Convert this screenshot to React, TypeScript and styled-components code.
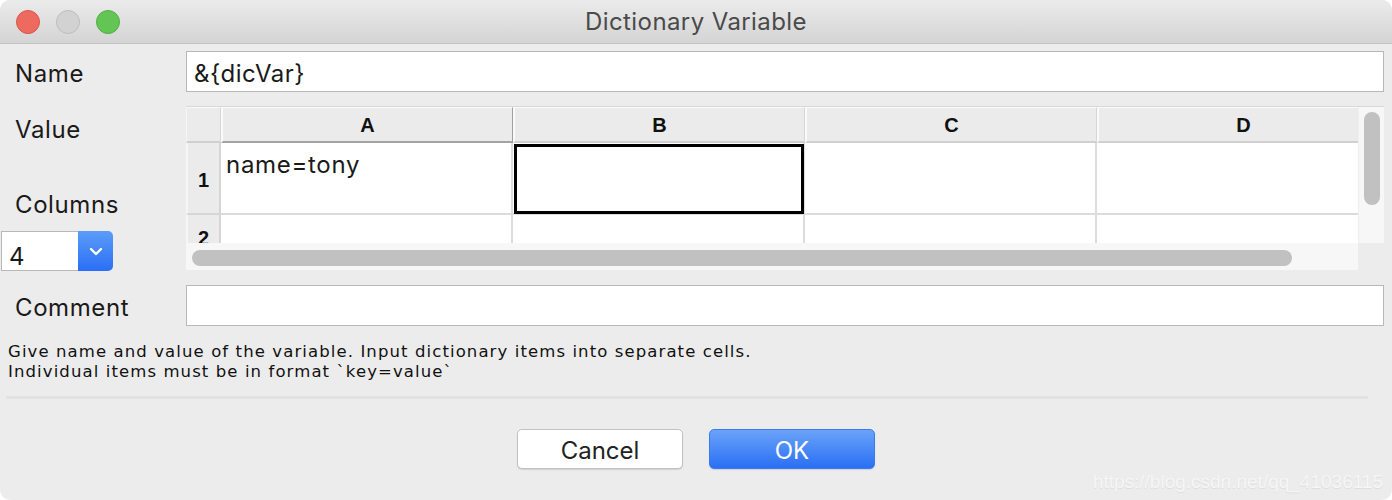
import React from "react";
import styled, { createGlobalStyle } from "styled-components";

const Global = createGlobalStyle`
  html, body { margin: 0; padding: 0; background: #ffffff; }
  body { width: 1392px; height: 500px; overflow: hidden; }
`;

const UI = `"Inter", "Liberation Sans", sans-serif`;

const Window = styled.div`
  width: 1392px;
  height: 500px;
  box-sizing: border-box;
  background: #ececec;
  border-radius: 10px;
  overflow: hidden;
  display: flex;
  flex-direction: column;
  position: relative;
  font-family: ${UI};
  color: #1a1a1a;
`;

const TitleBar = styled.div`
  height: 43px;
  flex: none;
  display: flex;
  align-items: center;
  position: relative;
  background: linear-gradient(#ebebeb, #d4d4d4);
  border-bottom: 1px solid #c4c4c4;
  padding-left: 16px;
  gap: 16px;
`;

const Light = styled.span<{ $c: string; $b: string }>`
  width: 22px;
  height: 22px;
  border-radius: 50%;
  background: ${(p) => p.$c};
  border: 1px solid ${(p) => p.$b};
`;

const Title = styled.div`
  position: absolute;
  left: 0;
  right: 0;
  text-align: center;
  font-size: 24px;
  letter-spacing: 0.4px;
  color: #4a4a4a;
  pointer-events: none;
`;

const Body = styled.div`
  display: flex;
  flex-direction: column;
  padding: 7px 8px 0 0;
`;

const FormRow = styled.div<{ $mt?: number }>`
  display: grid;
  grid-template-columns: 186px 1fr;
  margin-top: ${(p) => p.$mt ?? 0}px;
`;

const Label = styled.div<{ $h?: number; $bottom?: boolean }>`
  font-size: 24px;
  letter-spacing: 0.6px;
  padding-left: 15px;
  padding-top: 3px;
  box-sizing: border-box;
  height: ${(p) => p.$h ?? 41}px;
  display: flex;
  align-items: ${(p) => (p.$bottom ? "flex-end" : "center")};
`;

const TextBox = styled.div`
  height: 41px;
  box-sizing: border-box;
  background: #fff;
  border: 1px solid #b8b8b8;
  font-size: 24px;
  letter-spacing: 0.5px;
  padding: 4px 0 0 7px;
  display: flex;
  align-items: center;
`;

const LeftStack = styled.div`
  display: flex;
  flex-direction: column;
`;

const Combo = styled.div`
  margin: 12px 0 0 1px;
  width: 112px;
  height: 40px;
  display: flex;
`;

const ComboField = styled.div`
  width: 77px;
  box-sizing: border-box;
  background: #fff;
  border: 1px solid #b8b8b8;
  border-right: none;
  font-size: 24px;
  padding-left: 7px;
  padding-top: 10px;
  display: flex;
  align-items: center;
`;

const ComboButton = styled.div`
  flex: 1;
  background: linear-gradient(#5c9cf8, #2a6ff5);
  border-radius: 0 5px 5px 0;
  display: flex;
  align-items: center;
  justify-content: center;
`;

const TableFrame = styled.div`
  height: 164px;
  display: grid;
  grid-template-columns: 1fr 26px;
  grid-template-rows: 136px 27px;
  border-top: 1px solid #d8d8d8;
`;

const Viewport = styled.div`
  overflow: hidden;
  background: #ececec;
`;

const Grid = styled.div`
  display: grid;
  grid-template-columns: 35px repeat(4, 292px);
  grid-template-rows: 36px 72px 44px;
  width: max-content;
`;

const HeadCell = styled.div<{ $active?: boolean }>`
  background: #ebebeb;
  box-sizing: border-box;
  border-top: 1px solid #fafafa;
  border-left: 2px solid #fafafa;
  border-right: 1px solid ${(p) => (p.$active ? "#9f9f9f" : "#d6d6d6")};
  border-bottom: 2px solid ${(p) => (p.$active ? "#a3a3a3" : "#d0d0d0")};
  font-family: "Liberation Sans", sans-serif;
  font-weight: bold;
  font-size: 20px;
  padding-top: 2px;
  display: flex;
  align-items: center;
  justify-content: center;
  color: #111;
`;

const RowHead = styled(HeadCell)`
  border-top: none;
  border-bottom: 2px solid #d6d6d6;
  border-left: 2px solid #f6f6f6;
  border-right: 2px solid #d6d6d6;
  padding-top: 4px;
`;

const Cell = styled.div<{ $selected?: boolean }>`
  background: #fff;
  box-sizing: border-box;
  border-right: 2px solid #dcdcdc;
  border-bottom: 2px solid #dcdcdc;
  font-size: 24px;
  letter-spacing: 0.7px;
  padding: 7px 0 0 5px;
  outline: ${(p) => (p.$selected ? "3px solid #000" : "none")};
  outline-offset: -4px;
`;

const VTrack = styled.div`
  background: #f7f7f7;
  border-left: 1px solid #efefef;
  padding: 5px 4px 0 5px;
`;

const VThumb = styled.div`
  height: 93px;
  border-radius: 8px;
  background: #c1c1c1;
`;

const HTrack = styled.div`
  background: #f7f7f7;
  padding: 7px 0 0 6px;
`;

const HThumb = styled.div`
  width: 1100px;
  height: 16px;
  border-radius: 8px;
  background: #c1c1c1;
`;

const Corner = styled.div`
  background: #ececec;
`;

const Help = styled.div`
  font-family: "DejaVu Sans", sans-serif;
  font-size: 16.5px;
  letter-spacing: 1.1px;
  line-height: 20px;
  color: #111;
  padding-left: 8px;
  margin-top: 16px;
  white-space: nowrap;
`;

const Separator = styled.div`
  margin: 14px 16px 0 6px;
  height: 3px;
  background: #e2e2e2;
`;

const Buttons = styled.div`
  display: flex;
  justify-content: center;
  gap: 26px;
  margin-top: 30px;
  padding-left: 8px;
`;

const Button = styled.div<{ $primary?: boolean }>`
  width: 166px;
  height: 40px;
  box-sizing: border-box;
  border-radius: 5px;
  font-size: 24px;
  padding-top: 2px;
  display: flex;
  align-items: center;
  justify-content: center;
  background: ${(p) => (p.$primary ? "linear-gradient(#6aa3f8, #2a6ff5)" : "#fff")};
  color: ${(p) => (p.$primary ? "#fff" : "#222")};
  border: 1px solid ${(p) => (p.$primary ? "#3a7bf0" : "#c2c2c2")};
  box-shadow: 0 1px 1px rgba(0, 0, 0, 0.12);
`;

const Watermark = styled.div`
  position: absolute;
  right: 9px;
  bottom: 7px;
  font-family: "Liberation Sans", sans-serif;
  font-size: 19px;
  color: #f6f6f6;
  text-shadow: 0 1px 1px rgba(0, 0, 0, 0.07);
`;

const Chevron = () => (
  <svg width="14" height="9" viewBox="0 0 14 9">
    <path d="M2 2 L7 7 L12 2" fill="none" stroke="#fff" strokeWidth="2.4" strokeLinecap="round" strokeLinejoin="round" />
  </svg>
);

const cols = ["A", "B", "C", "D"];

export default function App() {
  return (
    <>
      <Global />
      <Window>
        <TitleBar>
          <Light $c="#ee6a5f" $b="#d5574c" />
          <Light $c="#d2d2d2" $b="#bdbdbd" />
          <Light $c="#62c554" $b="#52ad45" />
          <Title>Dictionary Variable</Title>
        </TitleBar>
        <Body>
          <FormRow>
            <Label>Name</Label>
            <TextBox>&amp;{"{dicVar}"}</TextBox>
          </FormRow>
          <FormRow $mt={14}>
            <LeftStack>
              <Label $h={44}>Value</Label>
              <Label $h={69} $bottom>
                Columns
              </Label>
              <Combo>
                <ComboField>4</ComboField>
                <ComboButton>
                  <Chevron />
                </ComboButton>
              </Combo>
            </LeftStack>
            <TableFrame>
              <Viewport>
                <Grid>
                  <HeadCell style={{ borderLeft: "1px solid #f6f6f6" }} />
                  {cols.map((c, i) => (
                    <HeadCell key={c} $active={i === 0}>
                      {c}
                    </HeadCell>
                  ))}
                  <RowHead>1</RowHead>
                  <Cell>name=tony</Cell>
                  <Cell $selected />
                  <Cell />
                  <Cell />
                  <RowHead>2</RowHead>
                  <Cell />
                  <Cell />
                  <Cell />
                  <Cell />
                </Grid>
              </Viewport>
              <VTrack>
                <VThumb />
              </VTrack>
              <HTrack>
                <HThumb />
              </HTrack>
              <Corner />
            </TableFrame>
          </FormRow>
          <FormRow $mt={14}>
            <Label>Comment</Label>
            <TextBox />
          </FormRow>
          <Help>
            Give name and value of the variable. Input dictionary items into separate cells.
            <br />
            Individual items must be in format `key=value`
          </Help>
          <Separator />
          <Buttons>
            <Button>Cancel</Button>
            <Button $primary>OK</Button>
          </Buttons>
        </Body>
        <Watermark>https://blog.csdn.net/qq_41036115</Watermark>
      </Window>
    </>
  );
}
